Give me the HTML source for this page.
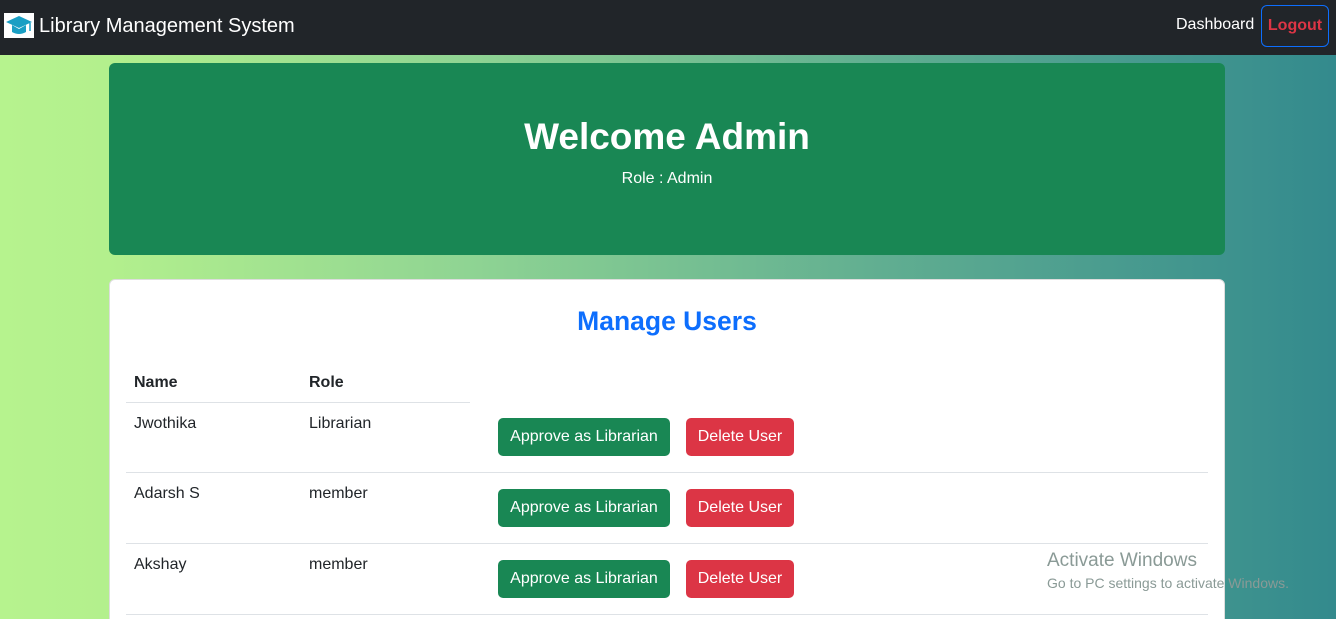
<!DOCTYPE html>
<html><head><meta charset="utf-8"><style>
*{margin:0;padding:0;box-sizing:border-box}
html,body{width:1336px;height:619px;overflow:hidden}
body{font-family:"Liberation Sans",sans-serif;background:linear-gradient(90deg,#b6f38e 0%,#b3f08d 8%,#8fd493 35%,#62af91 65%,#338a8d 100%);position:relative}
.nav{position:absolute;left:0;top:0;width:1336px;height:55px;background:#212529}
.logo{position:absolute;left:4px;top:13px;width:30px;height:25px;background:#fff}
.brand{position:absolute;left:39px;top:15px;color:#fff;font-size:20px}
.dash{position:absolute;left:1176px;top:16px;color:#fff;font-size:16px}
.logout{position:absolute;left:1261px;top:5px;width:68px;height:42px;border:1px solid #0d6efd;border-radius:6px;color:#dc3545;font-weight:bold;font-size:16px;text-align:center;line-height:40px}
.hero{position:absolute;left:109px;top:63px;width:1116px;height:192px;background:#198754;border-radius:6px;color:#fff;text-align:center}
.hero h1{font-size:37px;font-weight:bold;margin-top:51px;line-height:46px}
.hero p{font-size:16px;margin-top:10px}
.card{position:absolute;left:109px;top:279px;width:1116px;height:360px;background:#fff;border:1px solid #ddd;border-radius:6px}
.card h2{position:absolute;left:0;width:100%;top:26px;text-align:center;color:#0d6efd;font-size:26.5px;font-weight:bold}
.t{position:absolute;font-size:16px;color:#212529}
.b{font-weight:bold}
.line{position:absolute;height:1px;background:#dee2e6}
.btn{position:absolute;height:38px;border-radius:5px;color:#fff;font-size:16px;text-align:center;line-height:38px}
.g{background:#198754;width:172px;left:498px}
.r{background:#dc3545;width:108px;left:686px}
.wm{position:absolute;left:1047px;color:#8a9a96}
</style></head><body>
<div class="nav">
<div class="logo"><svg width="30" height="25" viewBox="0 0 30 25"><path d="M15 3 L28 9 L15 15 L2 9Z" fill="#1a9fc4"/><path d="M8 12 V19 Q15 23 22 19 V12 L15 16Z" fill="#1a9fc4"/><path d="M26 10 V18" stroke="#1a9fc4" stroke-width="1.5"/></svg></div>
<div class="brand">Library Management System</div>
<div class="dash">Dashboard</div>
<div class="logout">Logout</div>
</div>
<div class="hero"><h1>Welcome Admin</h1><p>Role : Admin</p></div>
<div class="card"><h2>Manage Users</h2></div>
<div class="t b" style="left:134px;top:374px">Name</div>
<div class="t b" style="left:309px;top:374px">Role</div>
<div class="line" style="left:126px;top:402px;width:344px"></div>
<div class="t" style="left:134px;top:415px">Jwothika</div>
<div class="t" style="left:309px;top:415px">Librarian</div>
<div class="btn g" style="top:418px">Approve as Librarian</div>
<div class="btn r" style="top:418px">Delete User</div>
<div class="line" style="left:126px;top:472px;width:1082px"></div>
<div class="t" style="left:134px;top:485px">Adarsh S</div>
<div class="t" style="left:309px;top:485px">member</div>
<div class="btn g" style="top:489px">Approve as Librarian</div>
<div class="btn r" style="top:489px">Delete User</div>
<div class="line" style="left:126px;top:543px;width:1082px"></div>
<div class="t" style="left:134px;top:556px">Akshay</div>
<div class="t" style="left:309px;top:556px">member</div>
<div class="btn g" style="top:560px">Approve as Librarian</div>
<div class="btn r" style="top:560px">Delete User</div>
<div class="line" style="left:126px;top:614px;width:1082px"></div>
<div class="wm" style="top:550px;font-size:19px">Activate Windows</div>
<div class="wm" style="top:575px;font-size:14px">Go to PC settings to activate Windows.</div>
</body></html>
